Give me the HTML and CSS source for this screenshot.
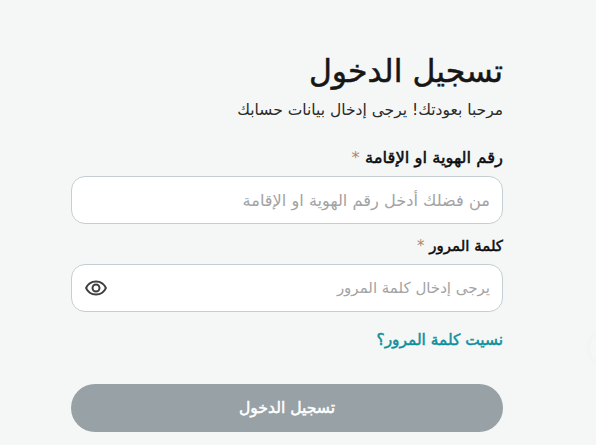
FILE: index.html
```html
<!DOCTYPE html>
<html lang="ar" dir="rtl">
<head><meta charset="utf-8"><title>تسجيل الدخول</title><link rel="stylesheet" href="styles.css"></head>
<body>
<main class="form">
<h1 class="title">تسجيل الدخول</h1>
<p class="sub">مرحبا بعودتك! يرجى إدخال بيانات حسابك</p>
<label class="label">رقم الهوية او الإقامة <span class="req">*</span></label>
<div class="field"><span class="ph ph-id">من فضلك أدخل رقم الهوية او الإقامة</span></div>
<label class="label second">كلمة المرور <span class="req">*</span></label>
<div class="field"><span class="ph ph-pass">يرجى إدخال كلمة المرور</span>
<svg class="eye" width="24" height="24" viewBox="0 0 24 24"><path fill="#3f3f3f" d="M12 6.5a9.77 9.77 0 0 1 8.82 5.5A9.76 9.76 0 0 1 12 17.5 9.76 9.76 0 0 1 3.18 12 9.77 9.77 0 0 1 12 6.5m0-2C7 4.5 2.73 7.61 1 12c1.73 4.39 6 7.5 11 7.5s9.27-3.11 11-7.5c-1.73-4.39-6-7.5-11-7.5zm0 5a2.5 2.5 0 0 1 0 5 2.5 2.5 0 0 1 0-5m0-2c-2.48 0-4.5 2.02-4.5 4.5s2.02 4.5 4.5 4.5 4.5-2.02 4.5-4.5-2.02-4.5-4.5-4.5z"/></svg>
</div>
<a class="forgot">نسيت كلمة المرور؟</a>
<div class="btn">تسجيل الدخول</div>
</main>
<div class="edge"></div>
</body>
</html>
```
FILE: styles.css
```css
html,body{margin:0;height:445px;overflow:hidden}
body{position:relative;background:#f5f7f7;font-family:"DejaVu Sans",sans-serif;color:#161616}
.form{width:432px;margin-left:0;margin-right:93px;padding-top:50px;display:flex;flex-direction:column}
.title{margin:0;font-size:31.5px;font-weight:400;line-height:42px;color:#161616;-webkit-text-stroke:.5px #161616}
.sub{margin:6px 0 0;font-size:15.5px;line-height:24px;color:#2b2b2b}
.label{margin-top:24px;font-size:16.4px;line-height:24px;color:#0c0c0c;-webkit-text-stroke:.5px #0c0c0c}
.label.second{margin-top:10px;font-size:15px}
.req{color:#b08968;-webkit-text-stroke:0}
.field{margin-top:6px;height:46px;background:#fff;border:1px solid #c5ced1;border-radius:14px;display:flex;align-items:center;justify-content:space-between;padding:0 12px}
.ph{color:#a3a3a3}
.ph-id{font-size:16.2px}
.ph-pass{font-size:15px}
.eye{display:block}
.forgot{margin-top:16px;font-size:15.4px;line-height:24px;color:#0e8f9c;-webkit-text-stroke:.5px #0e8f9c}
.btn{margin-top:32px;height:48px;border-radius:24px;background:#97a1a6;color:#fff;font-size:15.6px;-webkit-text-stroke:.5px #fff;display:flex;align-items:center;justify-content:center}
.edge{position:absolute;right:-30px;top:330px;width:36px;height:36px;border-radius:50%;box-shadow:0 0 10px rgba(0,0,0,.03)}
```
